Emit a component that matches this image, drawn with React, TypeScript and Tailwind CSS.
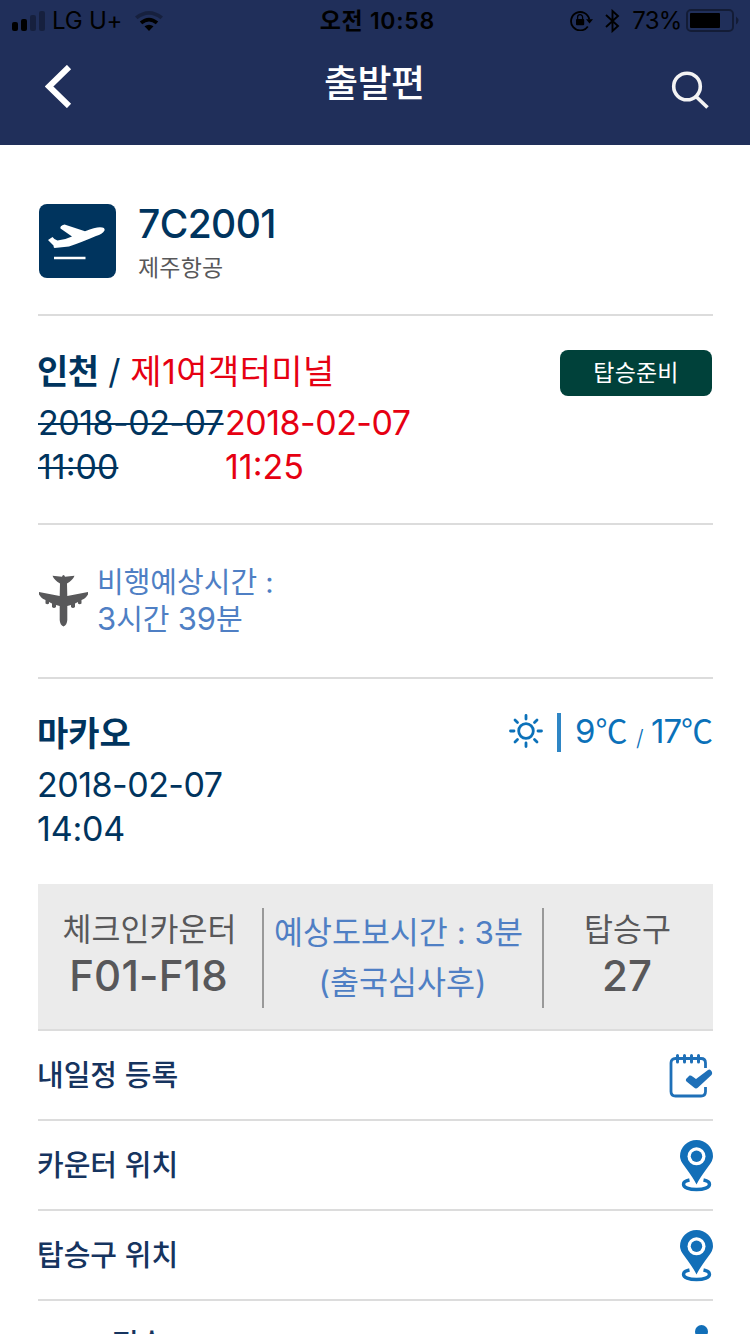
import type { ReactNode } from "react";

function StatusBar() {
  return (
    <div className="flex h-10 items-center pt-px pl-3 pr-[11px] text-black">
      <svg className="h-[20px] w-[33px] shrink-0" viewBox="0 0 33 20">
        <rect x="0" y="11" width="6" height="9" rx="2" />
        <rect x="9" y="8" width="6" height="12" rx="2" />
        <rect x="18" y="4" width="6" height="16" rx="2" opacity=".3" />
        <rect x="27" y="0" width="6" height="20" rx="2" opacity=".3" />
      </svg>
      <span className="ml-[7px] w-[82px] whitespace-nowrap text-[24px] leading-[40px] tracking-[-0.2px]">LG U+</span>
      <svg className="ml-px h-[20px] w-[28px] shrink-0" viewBox="0 0 28 20">
        <path d="M0 5.5Q14 -5.5 28 5.5L25.5 8.300Q14 -.8 2.500 8.300Z" opacity=".3" />
        <path d="M4.800 10.600Q14 3 23.200 10.600L20.800 13.200Q14 8 7.200 13.200Z" />
        <path d="M9.500 15.300Q14 12.200 18.500 15.300L14 20Z" />
      </svg>
      <span className="ml-[157px] w-[119px] whitespace-nowrap text-[23px] leading-[40px] font-semibold tracking-[0.7px]">오전 10:58</span>
      <svg className="ml-[132px] h-[21px] w-[23px] shrink-0" viewBox="0 0 23 21" fill="none" stroke="currentColor" strokeWidth="1.800">
        <path d="M17.800 16.500A9.200 9.200 0 1 1 19.300 9.500" />
        <path d="M16 9.200h7l-3.500 4.300z" fill="currentColor" stroke="none" />
        <rect x="6" y="9" width="8.200" height="6.300" rx="1" fill="currentColor" stroke="none" />
        <path d="M7.600 10V7.200a2.500 2.500 0 0 1 5 0V10" strokeWidth="1.300" />
      </svg>
      <svg className="ml-[12px] h-[24px] w-[15px] shrink-0" viewBox="0 0 15 24" fill="none" stroke="currentColor" strokeWidth="1.900">
        <path d="M1 6L13 17L7.500 22V2L13 7L1 18" />
      </svg>
      <span className="ml-[12px] w-[54px] whitespace-nowrap text-[24px] leading-[40px] tracking-[-0.7px]">73%</span>
      <svg className="h-[24px] w-[53px] shrink-0" viewBox="0 0 53 24">
        <rect x="1" y="1" width="46" height="21" rx="4" fill="none" stroke="#000" strokeOpacity=".4" strokeWidth="2" />
        <rect x="4" y="4" width="30" height="15" rx="1" />
        <path d="M50 7.500q5 4 0 8z" opacity=".4" />
      </svg>
    </div>
  );
}

function Header() {
  return (
    <header className="h-[145px] bg-[#202f5a]">
      <StatusBar />
      <div className="flex h-[88px] items-center pl-[45px] text-white">
        <svg className="mt-[5px] h-[43px] w-[104px] shrink-0" viewBox="0 0 104 43" fill="none" stroke="#fff" strokeWidth="6">
          <path d="M24 2L4 21.500L24 41" />
        </svg>
        <h1 className="ml-[175px] w-[280px] text-[37px] leading-[44px] font-medium tracking-[-0.6px]">출발편</h1>
        <svg className="mt-3 h-[38px] w-[105px] shrink-0" viewBox="0 0 105 38" fill="none" stroke="#f3f3f3" strokeWidth="3.600">
          <circle cx="83" cy="15.500" r="13.300" />
          <path d="M92.500 26L103.500 36.500" />
        </svg>
      </div>
    </header>
  );
}

function TakeoffIcon() {
  return (
    <svg className="mt-[3px] h-[74px] w-[77px] shrink-0" viewBox="0 0 77 74">
      <rect width="77" height="74" rx="8" fill="#00345e" />
      <path fill="#fff" d="M9 36L13.500 33Q15.500 36 18.500 36.500Q27 35.500 33 32.500L21.500 24.500Q20.500 22 25.500 20.500L46 27.300Q56 23.300 61 23.200Q66.500 23.300 65.500 26.500Q63.500 30 57 32Q42 38.500 30 42.500L15.500 44Q14.500 43.500 14.500 41.500Z" />
      <path d="M15 54h31.500" stroke="#fff" strokeWidth="2.500" />
    </svg>
  );
}

function PlaneIcon() {
  return (
    <svg className="mt-[12px] mr-[9px] h-[52px] w-[49px] shrink-0" viewBox="0 0 49 52" fill="#58585a">
      <path d="M24.500 0Q25.500 0 26 1.800L35.500 .8Q34 5 28 8.500L28.300 21L49 17V19.500Q46 24 42.500 25V28.500Q40.500 30 39 28.500V27L36 28.500V32Q34 33.800 32 32V30L28.300 31V45Q28 50 24.500 51.500Q21 50 20.700 45V31L17 30V32Q15 33.800 13 32V28.500L10 27V28.500Q8.500 30 6.500 28.500V25Q3 24 0 19.500V17L20.700 21L21 8.500Q15 5 13.500 .8L23 1.800Q23.500 0 24.500 0Z" />
    </svg>
  );
}

function SunIcon() {
  return (
    <svg className="h-[34px] w-[34px]" viewBox="0 0 34 34" fill="none" stroke="#0b71b9" strokeWidth="2.800" strokeLinecap="round">
      <circle cx="17" cy="17" r="7.300" />
      <path d="M17 1.500V5M17 29v3.500M1.500 17H5M29 17h3.500M6 6l2.500 2.500M25.500 25.500L28 28M28 6l-2.500 2.500M8.500 25.500L6 28" />
    </svg>
  );
}

function CalendarIcon() {
  return (
    <svg className="mt-[3px] h-[46px] w-[44px]" viewBox="0 0 44 46" fill="none" stroke="#1f70b8" strokeWidth="2.800">
      <path d="M36.500 14V9Q36.500 4.500 32 4.500H6.500Q2 4.500 2 9V37.500Q2 42 6.500 42H32Q36.500 42 36.500 37.500V33" />
      <path d="M8.500 1.500v6.500M15.500 1.500v6.500M22.500 1.500v6.500M29.500 1.500v6.500" strokeLinecap="round" strokeWidth="3" />
      <path fill="#1f70b8" stroke="none" d="M17 25L20.500 21.500Q22 21 23.500 22.500L27 25L39 16Q40.500 15 42 16.500L43 18Q43.500 20 42.500 21L29 33.500Q27 35.500 25 33.500L17.500 27.500Q16.500 26.500 17 25Z" />
    </svg>
  );
}

function PinIcon() {
  return (
    <svg className="mt-px h-[52px] w-[33px]" viewBox="0 0 33 52">
      <path fill="#126fb8" d="M16.500 44.500Q14 39 4 25.500Q0 20.500 0 16.300A16.500 16.300 0 0 1 33 16.300Q33 20.500 29 25.500Q19 39 16.500 44.500Z" />
      <circle cx="16.500" cy="16.300" r="9" fill="#fff" />
      <circle cx="16.500" cy="16.300" r="5.700" fill="#126fb8" />
      <path d="M9.500 40Q3.500 41.200 3.500 44.200C3.500 47.500 9 49.500 16.500 49.500S29.500 47.500 29.500 44.200Q29.500 41.200 23.500 40" fill="none" stroke="#126fb8" strokeWidth="3.400" />
    </svg>
  );
}

function DotIcon() {
  return (
    <svg className="mr-[5px] h-[40px] w-[13px]" viewBox="0 0 13 40">
      <circle cx="6.500" cy="6.500" r="6.500" fill="#126fb8" />
    </svg>
  );
}

function MenuRow({ label, icon }: { label: ReactNode; icon: ReactNode }) {
  return (
    <li className="flex h-[90px] shrink-0 items-center justify-between border-b-2 border-[#dcdcdc]">
      <span className="-ml-px pt-[2px] text-[29px] leading-[44px] font-medium text-[#16345f]">{label}</span>
      {icon}
    </li>
  );
}

function Celsius() {
  return <span className="font-['Noto_Sans_CJK_KR',sans-serif] text-[32px] tracking-[-2px]">℃</span>;
}

export default function App() {
  return (
    <div className="h-[1334px] w-[750px] overflow-hidden bg-white font-['Inter','Noto_Sans_CJK_KR',sans-serif]">
      <Header />
      <main className="pl-[38px] pr-[37px] text-[#00345e]">
        <section className="flex h-[171px] border-b-2 border-[#dcdcdc] pt-14 pl-px">
          <TakeoffIcon />
          <div className="ml-[22px] pt-px">
            <div className="text-[39px] leading-[44px] font-medium tracking-[-0.6px]">7C2001</div>
            <div className="mt-[7px] text-[23px] leading-[30px] tracking-[0.2px] text-[#58585a]">제주항공</div>
          </div>
        </section>

        <section className="h-[209px] border-b-2 border-[#dcdcdc] pt-[33px] text-[34px] leading-[44px]">
          <div className="flex items-start justify-between">
            <div className="-ml-px h-[44px] pt-px">
              <span className="font-bold tracking-[-0.6px]">인천</span>
              <span className="tracking-[0.2px]"> / </span>
              <span className="tracking-[0.4px] text-[#e60012]">제1여객터미널</span>
            </div>
            <div className="mt-px mr-px flex h-[46px] w-[152px] items-center justify-center rounded-lg bg-[#00413a] text-[23px] tracking-[0.2px] text-white">탑승준비</div>
          </div>
          <div className="mt-[5px] flex tracking-[-0.5px] whitespace-nowrap">
            <div className="w-[187px] line-through decoration-2">
              2018-02-07
              <br />
              <span className="tracking-normal">11:00</span>
            </div>
            <div className="text-[#e60012]">
              2018-02-07
              <br />
              <span className="tracking-normal">11:25</span>
            </div>
          </div>
        </section>

        <section className="flex h-[154px] border-b-2 border-[#dcdcdc] pt-[38px] pl-px">
          <PlaneIcon />
          <div className="pt-[2px] text-[29px] leading-[36px] text-[#4f7fc4]">
            비행예상시간 :
            <br />
            <span className="text-[31px]">3</span>시간 <span className="text-[31px]">39</span>분
          </div>
        </section>

        <section className="flex h-[205px] justify-between pt-8 text-[34px] leading-[44px]">
          <div>
            <div className="-ml-px pt-px font-bold">마카오</div>
            <div className="mt-[7px] -ml-px tracking-[-0.5px]">
              2018-02-07
              <br />
              <span className="tracking-[-0.2px]">14:04</span>
            </div>
          </div>
          <div className="flex items-start text-[33px] text-[#0b71b9]">
            <div className="mt-[3px]"><SunIcon /></div>
            <div className="mt-[2px] ml-[14px] h-[39px] w-1 bg-[#2f86c5]" />
            <span className="ml-[14px] w-[61px] whitespace-nowrap leading-[36px]">9<Celsius /></span>
            <span className="w-[15px] text-[22px] leading-[55px] font-light">/</span>
            <span className="w-[62px] whitespace-nowrap leading-[36px] tracking-[-1px]">17<Celsius /></span>
          </div>
        </section>

        <section className="flex h-[147px] items-start border-b-2 border-[#dcdcdc] bg-[#ebebeb] pt-6 text-center text-[31.5px] text-[#58585a]">
          <div className="h-[100px] w-[226px] border-r-2 border-[#999]">
            <div className="-ml-px leading-[44px]">체크인카운터</div>
            <div className="-ml-[3px] text-[42px] leading-[48px] font-medium tracking-[0.2px]">F01-F18</div>
          </div>
          <div className="h-[100px] w-[280px] border-r-2 border-[#999] leading-[50px] whitespace-nowrap text-[#4f7fc4]">
            <div className="-ml-[9px]">예상도보시간 : 3분</div>
            <div className="-ml-px">(출국심사후)</div>
          </div>
          <div className="h-[100px] flex-1">
            <div className="-ml-[2px] leading-[44px]">탑승구</div>
            <div className="-ml-[3px] text-[42px] leading-[48px] font-medium">27</div>
          </div>
        </section>

        <ul className="flex flex-col">
          <MenuRow label="내일정 등록" icon={<CalendarIcon />} />
          <MenuRow label="카운터 위치" icon={<PinIcon />} />
          <MenuRow label="탑승구 위치" icon={<PinIcon />} />
          <MenuRow label={<span className="mb-[3px] block"><span className="tracking-[0.8px]">SMS </span>전송</span>} icon={<DotIcon />} />
        </ul>
      </main>
    </div>
  );
}
